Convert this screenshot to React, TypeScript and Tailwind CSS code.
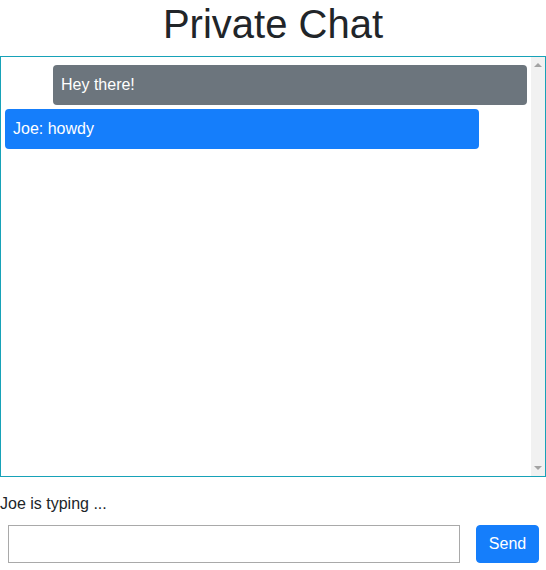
import React from "react";

export default function App() {
  return (
    <div className="w-[546px] h-[570px] bg-white text-[#212529] font-['Liberation_Sans',Arial,sans-serif] overflow-hidden">
      <h1 className="text-[40px] leading-[48px] text-center mb-2 font-normal">Private Chat</h1>
      <div className="h-[421px] border border-[#17a2b8] flex">
        <div className="flex-1 overflow-hidden px-1 pt-2">
          <div className="flex flex-col gap-1">
            <div className="self-end w-[474px] bg-[#6c757d] text-white rounded px-2 py-2 text-base leading-6">Hey there!</div>
            <div className="self-start w-[474px] bg-[#157efb] text-white rounded px-2 py-2 text-base leading-6">Joe: howdy</div>
          </div>
        </div>
        <div className="w-[14px] bg-[#f1f1f1] flex flex-col justify-between items-center py-[6px]">
          <div className="w-0 h-0 border-l-[4px] border-r-[4px] border-b-[4px] border-l-transparent border-r-transparent border-b-[#a3a3a3]" />
          <div className="w-0 h-0 border-l-[4px] border-r-[4px] border-t-[4px] border-l-transparent border-r-transparent border-t-[#a3a3a3]" />
        </div>
      </div>
      <div className="mt-[15px] text-base leading-6">Joe is typing ...</div>
      <div className="flex items-center mt-[9px] pl-2">
        <input className="w-[452px] h-[38px] border border-[#a9a9a9] outline-none px-2" />
        <button className="ml-4 h-[38px] w-[63px] rounded bg-[#157efb] text-white text-base border border-[#157efb]">Send</button>
      </div>
    </div>
  );
}
